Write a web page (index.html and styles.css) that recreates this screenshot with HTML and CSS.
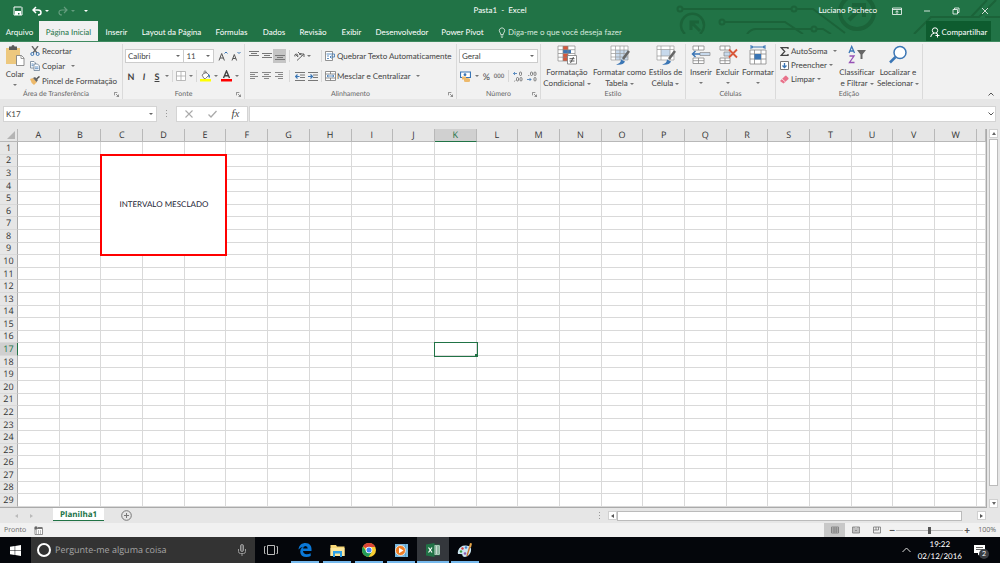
FILE: index.html
```html
<!DOCTYPE html>
<html lang="pt-BR">
<head>
<meta charset="utf-8">
<title>Pasta1 - Excel</title>
<link rel="stylesheet" href="styles.css">
</head>
<body>
<header class="top">
  <svg class="circuit" width="325" height="34" viewBox="0 0 325 34" fill="none" stroke="#1b6339" stroke-width="2">
    <circle cx="5" cy="9" r="2.5"/><path d="M8 9h109"/><circle cx="119" cy="9" r="2.500"/><path d="M122 9h16l32 24"/>
    <path d="M10 34a11.500 11.500 0 1 1 15 0" stroke-width="2.500"/><path d="M25 31l-8-8M16 30v-8h8" stroke-width="3"/>
    <circle cx="47" cy="22" r="2.500"/><path d="M50 22h60l18 12M72 34q4-5 9-5h56M142 29h6l8 5"/><circle cx="139" cy="29" r="2.500"/>
    <circle cx="182" cy="12" r="17" stroke-width="4"/><path d="M174 20l14-14M177 5h12v12" stroke-width="4"/>
    <path d="M239 34l17-17h48l17-17M296 17l16-17M310 17h15"/>
  </svg>
  <div class="titlebar">
    <div class="quick">
      <button aria-label="Salvar"><svg width="10" height="10" viewBox="0 0 10 10"><path d="M1 1h7.500l.5.5V9H1z" fill="none" stroke="#fff"/><path d="M2 5h6v4H6.500V7H5v2H2z" fill="#fff"/></svg></button>
      <button aria-label="Desfazer"><svg width="10" height="10" viewBox="0 0 10 10" fill="none" stroke="#fff" stroke-width="1.500"><path d="M4 1L1 4l3 3M1 4h5q3 0 3 2.500T6 9"/></svg><i class="caret"></i></button>
      <button class="off" aria-label="Refazer"><svg width="10" height="10" viewBox="0 0 10 10" fill="none" stroke="#fff" stroke-width="1.200"><path d="M6 1l3 3-3 3M9 4H4Q1 4 1 6.500T4 9"/></svg><i class="caret"></i></button>
      <button aria-label="Personalizar"><i class="caret bar"></i></button>
    </div>
    <h1>Pasta1 &nbsp;-&nbsp; Excel</h1>
    <div class="window">
      <span>Luciano Pacheco</span>
      <button aria-label="Opções da faixa"><svg width="10" height="8" viewBox="0 0 10 8" fill="none" stroke="#fff" stroke-width=".8"><path d="M.5 1h9v6.500h-9zM.5 2.500h9M5 7V4M3.500 5L5 3.700 6.500 5"/></svg></button>
      <button aria-label="Minimizar"><svg width="8" height="8" viewBox="0 0 8 8"><path d="M1 4h6" stroke="#fff" stroke-width=".8"/></svg></button>
      <button aria-label="Restaurar"><svg width="8" height="8" viewBox="0 0 8 8" fill="none" stroke="#fff" stroke-width=".8"><path d="M1 2.500h4.500V7H1zM2.500 2.500V1H7v4.500H5.500"/></svg></button>
      <button aria-label="Fechar"><svg width="8" height="8" viewBox="0 0 8 8"><path d="M1 1l6 6M7 1L1 7" stroke="#fff" stroke-width=".8"/></svg></button>
    </div>
  </div>
  <nav class="tabs">
    <button>Arquivo</button><button class="current">Página Inicial</button><button>Inserir</button><button>Layout da Página</button><button>Fórmulas</button><button>Dados</button><button>Revisão</button><button>Exibir</button><button>Desenvolvedor</button><button>Power Pivot</button>
    <button class="tell"><svg width="8" height="11" viewBox="0 0 8 11" fill="none" stroke="#e8f3ec" stroke-width=".8"><path d="M2.700 7.500Q2.700 6 1.700 5A2.700 2.700 0 1 1 6.300 5Q5.300 6 5.300 7.500zM2.700 9h2.600M3.200 10.300h1.600"/></svg>Diga-me o que você deseja fazer</button>
    <button class="share"><svg width="10" height="11" viewBox="0 0 10 11" fill="none" stroke="#fff"><circle cx="5" cy="3.500" r="2.700"/><path d="M.7 10Q1 6.700 4 6.200M6 6.200l1 .8M7.500 6.500v4M5.500 8.500h4"/></svg>Compartilhar</button>
  </nav>
</header>

<section class="ribbon">
  <div class="group clipboard">
    <div class="body">
      <button class="big"><svg width="20" height="22" viewBox="0 0 20 22"><path d="M1 3h14v16H1z" fill="#edc87e"/><path d="M4 1.500h2.500a1.500 1.500 0 0 1 3 0H12V5H4z" fill="#5b5b5b"/><path d="M11.500 10.500h5l2.500 2.500v7.500h-7.500z" fill="#fff" stroke="#777" stroke-width=".8"/><path d="M16 10.500v3h3" fill="none" stroke="#777" stroke-width=".7"/></svg><span>Colar</span><i class="caret"></i></button>
      <div class="list">
        <button><svg width="10" height="10" viewBox="0 0 10 10" fill="none"><path d="M2 0l5 7M8 0L3 7" stroke="#666" stroke-width="1.300"/><circle cx="2.300" cy="8" r="1.500" stroke="#3b76b5"/><circle cx="7.700" cy="8" r="1.500" stroke="#3b76b5"/></svg>Recortar</button>
        <button><svg width="10" height="10" viewBox="0 0 10 10" fill="#fff" stroke="#6b7f94" stroke-width=".8"><path d="M.5.5h3.500l1.500 1.500v5h-5z"/><path d="M4 3h3.500l2 2v4.500H4z"/><path d="M5 6h3.500M5 7.700h3.500M1.500 3h2M1.500 4.700h2" stroke="#3b76b5"/></svg>Copiar<i class="caret wide"></i></button>
        <button><svg width="10" height="10" viewBox="0 0 10 10"><path d="M0 3l3-1 4 4-3 3q-3-2-4-6z" fill="#edb96b"/><path d="M3 2l2-1 3 3-1.500 2z" fill="#666"/><path d="M6.500 3L9.500.5" stroke="#555" stroke-width="1.600"/></svg>Pincel de Formatação</button>
      </div>
    </div>
    <h2>Área de Transferência<svg class="launch" viewBox="0 0 6 6"><path d="M.5 4V.5H4M2.500 2.500l3 3M5.500 3v2.500H3"/></svg></h2>
  </div>

  <div class="group font">
    <div class="body rows">
      <div class="row"><select class="family" aria-label="Fonte"><option>Calibri</option></select><select class="size" aria-label="Tamanho"><option>11</option></select>
        <button class="letter grow" aria-label="Aumentar fonte"><svg width="10" height="10" viewBox="0 0 10 10" fill="none"><path d="M1 9.500l2.700-7 2.700 7M2 7h3.500" stroke="#555"/><path d="M6.500 2.500L8 1l1.500 1.500" stroke="#3b76b5"/></svg></button>
        <button class="letter" aria-label="Diminuir fonte"><svg width="10" height="10" viewBox="0 0 10 10" fill="none"><path d="M1 9.500l2.300-6 2.300 6M2 7.500h2.700" stroke="#555"/><path d="M6.500 1L8 2.500 9.500 1" stroke="#3b76b5"/></svg></button></div>
      <div class="row marks"><button><b>N</b></button><button><b><em>I</em></b></button><button><b><u>S</u></b></button><i class="caret"></i><i class="sep"></i>
        <button aria-label="Bordas"><svg width="10" height="10" viewBox="0 0 10 10" fill="#fff" stroke="#aaa" stroke-width=".8"><path d="M.5.5h9v9h-9zM5 .5v9M.5 5h9"/></svg></button><i class="caret"></i><i class="sep"></i>
        <button aria-label="Cor de preenchimento"><svg width="11" height="12" viewBox="0 0 11 12"><path d="M2 5l4-3 3 3-3.500 3.500H4z" fill="#fff" stroke="#666" stroke-width=".8"/><path d="M4 4V1.500q1-1.500 2 0V4" fill="none" stroke="#666" stroke-width=".7"/><path d="M8 4q3 1 1.500 4Q8 7 8 4z" fill="#3b76b5"/><path d="M0 9h11v2.500H0z" fill="#ff0"/></svg></button><i class="caret"></i>
        <button aria-label="Cor da fonte"><svg width="11" height="12" viewBox="0 0 11 12"><path d="M2.500 8l3-7 3 7M3.500 5.700h4" fill="none" stroke="#444" stroke-width="1.400"/><path d="M0 9h11v2.500H0z" fill="red"/></svg></button><i class="caret"></i></div>
    </div>
    <h2>Fonte<svg class="launch" viewBox="0 0 6 6"><path d="M.5 4V.5H4M2.500 2.500l3 3M5.500 3v2.500H3"/></svg></h2>
  </div>

  <div class="group align">
    <div class="body rows">
      <div class="row"><button class="cell" aria-label="Alinhar em cima"><svg width="10" height="10" viewBox="0 0 10 10" stroke="#777"><path d="M0 .5h10M2 2.500h6M0 4.500h10"/></svg></button><button class="cell" aria-label="Alinhar no meio"><svg width="10" height="10" viewBox="0 0 10 10" stroke="#777"><path d="M0 2.500h10M2 4.500h6M0 6.500h10"/></svg></button><button class="cell on" aria-label="Alinhar embaixo"><svg width="10" height="10" viewBox="0 0 10 10" stroke="#777"><path d="M0 4.500h10M2 6.500h6M0 8.500h10"/></svg></button><i class="sep"></i>
        <button class="cell" aria-label="Orientação"><svg width="11" height="10" viewBox="0 0 11 10" fill="none" stroke="#666"><path d="M3 9.500L10 3M10 6V3H7"/><path d="M1 3l3 3M1 5.500q-1-2 1-2.500t2 2.500M4 1l3.500 3.500M5.500 4q0-2 2-1.500"/></svg></button><i class="caret"></i><i class="sep last"></i>
        <button class="text"><svg width="11" height="10" viewBox="0 0 11 10" fill="#fff" stroke="#777" stroke-width=".8"><path d="M.5.500h7v9h-7z"/><path d="M1.500 3h8v3H5M6.500 4.500L5 6l1.500 1.500M2 5h2M2 7.500h2" fill="none" stroke="#3b76b5"/></svg>Quebrar Texto Automaticamente</button></div>
      <div class="row"><button class="cell" aria-label="Alinhar à esquerda"><svg width="9" height="8" viewBox="0 0 9 8" stroke="#888"><path d="M1 .5h8M1 2.500h5M1 4.500h8M1 6.500h5"/></svg></button><button class="cell" aria-label="Centralizar"><svg width="9" height="8" viewBox="0 0 9 8" stroke="#888"><path d="M0 .5h9M2 2.500h5M0 4.500h9M2 6.500h5"/></svg></button><button class="cell" aria-label="Alinhar à direita"><svg width="9" height="8" viewBox="0 0 9 8" stroke="#888"><path d="M0 .5h8M3 2.500h5M0 4.500h8M3 6.500h5"/></svg></button><i class="sep"></i>
        <button class="cell" aria-label="Diminuir recuo"><svg width="10" height="9" viewBox="0 0 10 9" stroke="#777" fill="none"><path d="M0 .5h10M5 3h5M5 5.500h5M0 8.500h10"/><path d="M4.500 4.500H.7M2.500 2.500l-2 2 2 2" stroke="#3b76b5" stroke-width="1.200"/></svg></button><button class="cell" aria-label="Aumentar recuo"><svg width="10" height="9" viewBox="0 0 10 9" stroke="#777" fill="none"><path d="M0 .5h10M5 3h5M5 5.500h5M0 8.500h10"/><path d="M0 4.500h4M2.500 2.500l2 2-2 2" stroke="#3b76b5" stroke-width="1.200"/></svg></button><i class="sep last"></i>
        <button class="text"><svg width="11" height="10" viewBox="0 0 11 10" fill="#fff" stroke="#777" stroke-width=".8"><path d="M.5.500h10v9H.5zM.5 3h10M.5 7h10M5.500.5V3M5.500 7v2.500"/><path d="M2 5h7M3.500 4L2 5l1.500 1M7.500 4L9 5 7.500 6" fill="none" stroke="#3b76b5"/></svg>Mesclar e Centralizar<i class="caret wide"></i></button></div>
    </div>
    <h2>Alinhamento<svg class="launch" viewBox="0 0 6 6"><path d="M.5 4V.5H4M2.500 2.500l3 3M5.500 3v2.500H3"/></svg></h2>
  </div>

  <div class="group number">
    <div class="body rows">
      <div class="row"><select class="format" aria-label="Formato"><option>Geral</option></select></div>
      <div class="row spread"><button aria-label="Moeda"><svg width="11" height="11" viewBox="0 0 11 11"><path d="M.5 1h10v5.500H.5z" fill="#fff" stroke="#3b76b5" stroke-width="1.200"/><circle cx="5" cy="3.700" r="1.400" fill="#3b76b5"/><path d="M4 8q3-2 6 0v2.500q-3 1-6 0zM2 5.500h4v3H2z" fill="#edb96b"/></svg></button><i class="caret"></i><button class="pct">%</button><button class="zeros" aria-label="Milhares">000</button><i class="sep"></i>
        <button aria-label="Mais casas"><svg width="10" height="11" viewBox="0 0 10 11" fill="none" stroke="#666" stroke-width=".8"><path d="M4 2.500H.5M2 1L.5 2.500 2 4" stroke="#3b76b5"/><rect x="6.500" y="1" width="2" height="3.500" rx="1"/><rect x="3.500" y="6.500" width="2" height="3.500" rx="1"/><rect x="7" y="6.500" width="2" height="3.500" rx="1"/><path d="M1.500 10.500l.5-1"/></svg></button><button aria-label="Menos casas"><svg width="10" height="11" viewBox="0 0 10 11" fill="none" stroke="#666" stroke-width=".8"><path d="M0 8.500h4M2.500 7L4 8.500 2.500 10" stroke="#3b76b5"/><rect x="3.500" y="1" width="2" height="3.500" rx="1"/><rect x="7" y="1" width="2" height="3.500" rx="1"/><rect x="7" y="6.500" width="2" height="3.500" rx="1"/><path d="M1.500 5l.5-1"/></svg></button></div>
    </div>
    <h2>Número<svg class="launch" viewBox="0 0 6 6"><path d="M.5 4V.5H4M2.500 2.500l3 3M5.500 3v2.500H3"/></svg></h2>
  </div>

  <div class="group styles">
    <div class="body">
      <button class="big"><svg width="20" height="20" viewBox="0 0 20 20"><path d="M1 1h17v15H1z" fill="#fff"/><path d="M6 1h5v4H6zM6 12h5v4H6z" fill="#d9583b"/><path d="M6 5h8v3.500H6z" fill="#3b76b5"/><path d="M6 8.500h5V12H6z" fill="#d9583b"/><path d="M1 1h17v15H1zM6 1v15M11 1v15M1 4.700h17M1 8.500h17M1 12.200h17" fill="none" stroke="#888" stroke-width=".7"/><path d="M10.500 10.500h9v8.500h-9z" fill="#fff" stroke="#777" stroke-width=".8"/><path d="M12.500 13.700h5M12.500 16h5M16.500 12l-3 6" stroke="#444" stroke-width=".9"/></svg><span>Formatação<br>Condicional <i class="caret"></i></span></button>
      <button class="big"><svg width="20" height="20" viewBox="0 0 20 20"><path d="M1 1h17v14H1z" fill="#fff"/><path d="M5.500 5H18v10H5.500z" fill="#c7d9ec"/><path d="M1 1h17v14H1zM5.500 1v14M10 1v14M14 1v14M1 5h17M1 8.500h17M1 12h17" fill="none" stroke="#999" stroke-width=".7"/><path d="M19 6l-6 8" stroke="#666" stroke-width="2.600"/><path d="M6 19.500q5-1 5-5l4 2q-2 4-9 3z" fill="#3b76b5"/></svg><span>Formatar como<br>Tabela <i class="caret"></i></span></button>
      <button class="big"><svg width="20" height="20" viewBox="0 0 20 20"><path d="M1 1h17v14H1z" fill="#fff" stroke="#999" stroke-width=".7"/><path d="M5 4.500h9v6.500H5z" fill="#c7d9ec"/><path d="M5 1v14M14 1v14M1 4.500h17M1 11h17" fill="none" stroke="#999" stroke-width=".7"/><path d="M19 6l-6 8" stroke="#666" stroke-width="2.600"/><path d="M6 19.500q5-1 5-5l4 2q-2 4-9 3z" fill="#3b76b5"/></svg><span>Estilos de<br>Célula <i class="caret"></i></span></button>
    </div>
    <h2>Estilo</h2>
  </div>

  <div class="group cells">
    <div class="body">
      <button class="big"><svg width="20" height="20" viewBox="0 0 20 20"><path d="M2 1h11v4H2zM2 13h11v5.500H2zM7.500 1v4M7.500 13v5.500M2 15.700h11" fill="#fff" stroke="#888" stroke-width=".8"/><path d="M9 7.500h10v3H9z" fill="#c7d9ec" stroke="#888" stroke-width=".7"/><path d="M9 9H1.500M4.500 6l-3 3 3 3" fill="none" stroke="#3b76b5" stroke-width="1.500"/></svg><span>Inserir</span><i class="caret"></i></button>
      <button class="big"><svg width="20" height="20" viewBox="0 0 20 20"><path d="M2 1h10v4H2zM2 13h10v5.500H2zM7 1v4M7 13v5.500M2 15.700h10" fill="#fff" stroke="#888" stroke-width=".8"/><path d="M6 7h6v4H6z" fill="#c7d9ec" stroke="#888" stroke-width=".7"/><path d="M11 4.500l8 8M19 4.500l-8 8" stroke="#d9583b" stroke-width="1.800"/></svg><span>Excluir</span><i class="caret"></i></button>
      <button class="big"><svg width="20" height="20" viewBox="0 0 20 20"><path d="M2 5h16v14H2zM6.500 5v14M13 5v14M2 9h16M2 14h16" fill="#fff" stroke="#888" stroke-width=".8"/><path d="M6.500 9H13v5.500H6.500z" fill="#3b76b5"/><path d="M3 2h14M3 0v4M17 0v4M5 1L3.500 2 5 3M15 1l1.500 1L15 3" fill="none" stroke="#3b76b5"/></svg><span>Formatar</span><i class="caret"></i></button>
    </div>
    <h2>Células</h2>
  </div>

  <div class="group editing">
    <div class="body">
      <div class="list">
        <button><svg width="9" height="9" viewBox="0 0 9 9"><path d="M8 2V.7H1.200L4.700 4.500 1.200 8.300H8V7" fill="none" stroke="#444" stroke-width="1.300"/></svg>AutoSoma<i class="caret wide"></i></button>
        <button><svg width="9" height="9" viewBox="0 0 9 9"><path d="M.5.500h8v8h-8z" fill="#fff" stroke="#777"/><path d="M4.500 2v4.500M2.500 4.500l2 2 2-2" fill="none" stroke="#3b76b5" stroke-width="1.300"/></svg>Preencher<i class="caret"></i></button>
        <button><svg width="9" height="9" viewBox="0 0 9 9"><path d="M0 6l5-5 1-.5L8.500 3v1L3.500 8.500z" fill="#e8718a"/><path d="M2 4l3.500 3" stroke="#fbd5dc"/></svg>Limpar<i class="caret"></i></button>
      </div>
      <button class="big"><svg width="20" height="20" viewBox="0 0 20 20" fill="none"><path d="M2 8l2.700-6.500L7.500 8M3 6h3.500" stroke="#3b76b5" stroke-width="1.300"/><path d="M2.500 11H7l-4.500 6.500H7.500" stroke="#9651b5" stroke-width="1.300"/><path d="M10 5h9l-3.500 4.500V14h-2V9.500z" fill="#666"/></svg><span>Classificar<br>e Filtrar <i class="caret"></i></span></button>
      <button class="big"><svg width="20" height="20" viewBox="0 0 20 20"><circle cx="12" cy="7.500" r="6" fill="#fff" stroke="#3b76b5" stroke-width="1.500"/><path d="M7.500 12L2 17.500" stroke="#3b76b5" stroke-width="2.500"/></svg><span>Localizar e<br>Selecionar <i class="caret"></i></span></button>
    </div>
    <h2>Edição</h2>
  </div>
  <button class="collapse" aria-label="Recolher"><svg width="6" height="4" viewBox="0 0 6 4"><path d="M.5 3.500L3 1l2.500 2.500" fill="none" stroke="#555"/></svg></button>
</section>

<section class="formula">
  <select class="name" aria-label="Caixa de nome"><option>K17</option></select>
  <i class="dots"></i>
  <div class="fx"><button aria-label="Cancelar"><svg width="8" height="8" viewBox="0 0 8 8"><path d="M.5.5l7 7M7.500.5l-7 7" stroke="#aaa" stroke-width="1.100"/></svg></button><button aria-label="Inserir"><svg width="9" height="8" viewBox="0 0 9 8"><path d="M.5 4.500L3 7l5.500-6" fill="none" stroke="#aaa" stroke-width="1.300"/></svg></button><button class="fn"><em>fx</em></button></div>
  <div class="entry"><input type="text" aria-label="Barra de fórmulas"><button aria-label="Expandir"><svg width="6" height="4" viewBox="0 0 6 4"><path d="M.5.5L3 3 5.500.5" fill="none" stroke="#555"/></svg></button></div>
</section>

<main class="sheet">
  <div class="gridwrap"><table class="grid" id="grid"></table></div>
  <div class="vscroll"><button aria-label="Para cima"><i class="arrow up"></i></button><div class="thumb"></div><button aria-label="Para baixo"><i class="arrow down"></i></button></div>
</main>

<div class="sheets">
  <div class="pick"><i class="arrow left dim"></i><i class="arrow right dim"></i><button class="sheet-tab">Planilha1</button><button aria-label="Nova planilha"><svg width="11" height="11" viewBox="0 0 11 11" fill="none" stroke="#777"><circle cx="5.500" cy="5.500" r="4.800"/><path d="M5.500 3v5M3 5.500h5"/></svg></button></div>
  <div class="hscroll"><i class="dots"></i><button aria-label="Esquerda"><i class="arrow left"></i></button><div class="thumb"></div><button aria-label="Direita"><i class="arrow right"></i></button></div>
</div>

<footer class="status">
  <span>Pronto</span><svg width="9" height="9" viewBox="0 0 9 9"><path d="M1 2.500h7.500v6H1z" fill="#fff" stroke="#777" stroke-width=".8"/><circle cx="2" cy="2" r="1.700" fill="#666"/><path d="M4 1h4.500v2H4z" fill="#777"/><path d="M2 5h5.500M2 7h5.500" stroke="#777" stroke-dasharray="1 1"/></svg>
  <div class="views">
    <button class="on" aria-label="Normal"><svg width="8" height="8" viewBox="0 0 8 8" fill="none" stroke="#777" stroke-width=".8"><path d="M.5 1h7v6h-7zM.5 3h7M.5 5h7M3 1v6M5.200 1v6"/></svg></button><button aria-label="Layout da Página"><svg width="8" height="8" viewBox="0 0 8 8" fill="none" stroke="#777" stroke-width=".8"><path d="M.5 1h7v6h-7zM2 1v6M6 1v6M3 3h2M3 4.500h2M3 6h2"/></svg></button><button aria-label="Quebra de Página"><svg width="8" height="8" viewBox="0 0 8 8" fill="none" stroke="#777" stroke-width=".8"><path d="M.5 1h7v6h-7zM3 1v3h2.500V1M.5 4H3"/></svg></button>
  </div>
  <div class="zoom"><button aria-label="Menos zoom">−</button><input type="range" min="10" max="190" value="100" aria-label="Zoom"><button aria-label="Mais zoom">+</button><span class="level">100%</span></div>
</footer>

<nav class="taskbar">
  <button class="start" aria-label="Iniciar"><svg width="11" height="11" viewBox="0 0 11 11" fill="#fff"><path d="M0 1.700l4.700-.7v4.200H0zM5.200.9L11 0v5.200H5.200zM0 5.700h4.700V10L0 9.300zM5.200 5.700H11V11l-5.800-.9z"/></svg></button>
  <label class="search"><svg width="16" height="16" viewBox="0 0 16 16"><circle cx="8" cy="8" r="6" fill="none" stroke="#fff" stroke-width="2"/></svg><input type="text" placeholder="Pergunte-me alguma coisa" aria-label="Pesquisa"><svg width="8" height="12" viewBox="0 0 8 12" fill="none" stroke="#999"><rect x="2.500" y=".5" width="3" height="7" rx="1.500" fill="#666"/><path d="M.5 5v2.500q0 2 2 2h3q2 0 2-2V5M4 9.500V12"/></svg></label>
  <button class="app" aria-label="Visão de tarefas"><svg width="14" height="12" viewBox="0 0 14 12" fill="none" stroke="#bbb"><path d="M3.500 1.500h7v9h-7zM1.500 2.500h-1v7h1M12.500 2.500h1v7h-1"/></svg></button>
  <div class="apps">
    <button class="app open" aria-label="Edge"><svg width="14" height="14" viewBox="0 0 14 14"><path d="M.5 6.500C1 2 4 0 7.500 0 11.500 0 13.500 3 13.500 6v2H5q.2 3 3.700 3.200 2.300 0 4-1v2.900Q11 14 8.500 14 2.500 14 2.200 8.800 2.200 5.500 5 3.800 2.500 4.300.5 6.500zM5 5.500h4.700Q9.700 3 7.500 3T5 5.500z" fill="#0a78d7"/></svg></button>
    <button class="app open" aria-label="Explorador"><svg width="15" height="13" viewBox="0 0 15 13"><path d="M.5 1H6l1 1.500h7.500V12H.5z" fill="#f9d877"/><path d="M.5 4h14v8H.5z" fill="#fce69c"/><path d="M3 7h9v6h-2V9.500H5V13H3z" fill="#2fa1e6"/></svg></button>
    <button class="app open" aria-label="Chrome"><svg width="14" height="14" viewBox="0 0 14 14"><circle cx="7" cy="7" r="7" fill="#f9cd32"/><path d="M7 7L1 3.400A7 7 0 0 1 13.200 4H7z" fill="#db4437"/><path d="M1 3.400A7 7 0 0 0 6.500 14L10 8.700 7 7 4.400 8.500z" fill="#229c58"/><circle cx="7" cy="7" r="3.300" fill="#fff"/><circle cx="7" cy="7" r="2.500" fill="#4385f5"/></svg></button>
    <button class="app open" aria-label="Media Player"><svg width="13" height="13" viewBox="0 0 13 13"><path d="M0 0h13v13H0z" fill="#79b9df"/><path d="M10.500 0v13" stroke="#4d8fb8" stroke-width=".6"/><circle cx="5.500" cy="6.500" r="5" fill="#f07d22" stroke="#fff" stroke-width=".7"/><path d="M4 3.700l4.500 2.800L4 9.300z" fill="#fff"/></svg></button>
    <button class="app open active" aria-label="Excel"><svg width="14" height="14" viewBox="0 0 14 14"><path d="M7.500 2H14v10H7.500z" fill="#fff" stroke="#217346" stroke-width=".8"/><path d="M8.500 4h4.500M8.500 6h4.500M8.500 8h4.500M8.500 10h4.500" stroke="#217346" stroke-dasharray="2 .5"/><path d="M0 1.500L8.500 0v14L0 12.500z" fill="#217346"/><path d="M2.500 4.500l3.500 5M6 4.500l-3.500 5" stroke="#fff" stroke-width="1.200"/></svg></button>
    <button class="app open" aria-label="Paint"><svg width="16" height="15" viewBox="0 0 16 15"><path d="M1 8q2-6 8-5.500t5 5.500-6 6q-3-.5-2.500-2T1 11q-.5-1 0-3z" fill="#cde6f2"/><circle cx="4" cy="8.500" r="1.200" fill="#3c9e48"/><circle cx="5.500" cy="5.500" r="1.200" fill="#d93c3c"/><circle cx="9" cy="4.500" r="1.200" fill="#3f80cf"/><circle cx="8" cy="10.500" r="1.300" fill="#8b5bb0"/><path d="M10 13l3-10" stroke="#c9772f" stroke-width="1.400"/><path d="M12 4l1-4 2 .5-1 4z" fill="#e8a648"/></svg></button>
  </div>
  <div class="tray"><button aria-label="Ícones ocultos"><svg width="9" height="6" viewBox="0 0 9 6"><path d="M.5 5l4-4 4 4" fill="none" stroke="#ddd"/></svg></button><time>19:22<br>02/12/2016</time><button class="note" aria-label="Notificações"><svg width="11" height="11" viewBox="0 0 11 11"><path d="M0 0h11v8H6.500L4 10.500V8H0z" fill="#fff"/><path d="M2 2.500h7M2 4.500h7" stroke="#222" stroke-width=".7"/></svg><span class="badge">2</span></button></div>
</nav>
<script src="script.js"></script>
</body>
</html>
```

FILE: styles.css
```css
* { box-sizing: border-box; }
html, body { height: 100%; }
body {
  margin: 0;
  display: flex;
  flex-direction: column;
  overflow: hidden;
  background: #e6e6e6;
  color: #444;
  font: 8px/11px Lato, "Open Sans", sans-serif;
  font-variant-ligatures: none;
  text-rendering: geometricPrecision;
}
button, select, input { font: inherit; color: inherit; text-rendering: inherit; font-variant-ligatures: none; }
button { display: inline-flex; align-items: center; justify-content: center; padding: 0; border: 0; background: none; white-space: nowrap; }
svg { flex: none; display: block; }
h1, h2 { margin: 0; font-weight: normal; }
h1 { font-size: 8px; }

.caret { flex: none; display: inline-block; border: solid transparent; border-width: 2px 2px 0; border-top-color: #777; vertical-align: middle; }
.caret.wide { margin-left: 4px; }
.caret.bar { border-top-color: #fff; }
.sep { flex: none; width: 1px; height: 12px; background: #d8d8d8; }
.dots { flex: none; width: 1px; height: 8px; background: repeating-linear-gradient(#999 0 1px, transparent 1px 3px); }
.arrow { display: inline-block; border: 3px solid transparent; }
.arrow.up { border-width: 0 2px 3px; border-bottom-color: #666; }
.arrow.down { border-width: 3px 2px 0; border-top-color: #666; }
.arrow.left { border-width: 2px 3px 2px 0; border-right-color: #555; }
.arrow.right { border-width: 2px 0 2px 3px; border-left-color: #555; }
.arrow.dim { opacity: .3; }

/* Title bar and tabs */
.top { position: relative; background: #217346; color: #fff; border-bottom: 1px solid #3f8a60; }
.circuit { position: absolute; right: 0; top: 0; }
.titlebar { position: relative; display: grid; grid-template-columns: 1fr auto 1fr; align-items: center; height: 21px; }
.quick { display: flex; align-items: center; gap: 9px; padding-left: 13px; }
.quick button { gap: 3px; }
.quick .caret { border-top-color: #fff; }
.quick .off { opacity: .3; }
.window { display: flex; align-items: center; justify-content: flex-end; padding-right: 11px; }
.window button { margin-left: 21px; }
.window span + button { margin-left: 15px; }
.tabs { position: relative; display: grid; grid-template-columns: 39px 59px 37px 73px 47px 38px 40px 37px 64px 57px auto 1fr; align-items: stretch; height: 20px; }
.tabs button { padding-top: 2px; }
.tabs .current { background: #f1f1f1; color: #217346; }
.tabs .tell { gap: 2px; padding-left: 7px; color: #d5e8dc; }
.tabs .share { justify-self: end; gap: 2px; width: 65px; margin-right: 9px; background: #0e5c2f; }

/* Ribbon */
.ribbon { display: flex; height: 57px; background: #f1f1f1; }
.group { flex: none; display: flex; flex-direction: column; margin-top: 2px; border-right: 1px solid #dadada; }
.body { flex: 1; min-height: 0; display: flex; }
.group h2 { flex: none; position: relative; line-height: 10px; font-size: 7px; color: #666; text-align: center; }
.launch { position: absolute; right: 3px; top: 3px; width: 5px; height: 5px; fill: none; stroke: #777; stroke-width: 1; }
.clipboard { width: 123px; }
.font { width: 122px; }
.align { width: 212px; }
.number { width: 84px; }
.styles { width: 145px; }
.cells { width: 90px; }
.editing { width: 147px; }
.clipboard h2 { padding-right: 10px; }
.big { flex-direction: column; justify-content: flex-start; padding-top: 1px; }
.big svg { margin-bottom: 2px; }
.big > .caret { margin-top: 4px; }
.clipboard .big { width: 30px; }
.styles .body { display: grid; grid-template-columns: 52px 53px 39px; }
.cells .body { display: grid; grid-template-columns: 26px 27px 34px; padding-left: 2px; }
.editing .body { display: grid; grid-template-columns: 62px 38px 44px; }
.list { display: flex; flex-direction: column; justify-content: space-between; align-items: flex-start; padding-bottom: 1px; }
.list button { height: 14px; gap: 2px; }
.editing .list { padding-left: 4px; padding-bottom: 3px; }
.rows { flex-direction: column; padding: 5px 2px 6px; justify-content: space-between; }
.row { display: flex; align-items: center; height: 14px; }
select { appearance: none; height: 14px; padding: 0 2px; border: 1px solid #ccc; border-radius: 0; background: #fff url("data:image/svg+xml,%3Csvg xmlns='http://www.w3.org/2000/svg' width='4' height='2'%3E%3Cpath d='M0 0h4L2 2z' fill='%23666'/%3E%3C/svg%3E") no-repeat right 3px center; }
.family { width: 61px; }
.size { width: 31px; margin-left: -1px; }
.letter { width: 13px; }
.letter.grow { margin-left: 3px; }
.marks { font-size: 9px; justify-content: space-between; padding: 0 3px 0 1px; }
.marks button:nth-child(-n+3) { width: 10px; }
.cell { width: 13px; height: 14px; }
.cell.on { background: #c5c5c5; }
.align .sep { margin: 0 3px; }
.align .cell + .caret { margin-left: 1px; }
.align .sep.last { margin: 0 3px 0 auto; }
.align .text { width: 129px; justify-content: flex-start; gap: 1px; }
.format { width: 80px; }
.number .spread { justify-content: space-between; padding: 0 1px; }
.pct { font-size: 9px; }
.zeros { font-size: 6px; font-weight: bold; color: #777; }
.collapse { margin: auto 6px 3px auto; }

/* Formula bar */
.formula { display: flex; align-items: center; gap: 9px; height: 30px; padding: 0 4px 0 3px; }
.formula select { width: 154px; height: 16px; border-color: #d4d4d4; }
.fx { display: flex; justify-content: space-around; width: 72px; height: 16px; background: #fff; border: 1px solid #d4d4d4; }
.fn { font: 11px/12px "Liberation Serif", serif; }
.entry { flex: 1; display: flex; height: 16px; margin-left: -8px; padding-right: 1px; background: #fff; border: 1px solid #d4d4d4; }
.entry input { flex: 1; min-width: 0; border: 0; background: none; outline: none; }

/* Worksheet */
.sheet { flex: 1; min-height: 0; display: flex; }
.gridwrap { flex: 1; min-width: 0; background: #fff; border-right: 1px solid #aaa; border-bottom: 1px solid #aaa; }
.grid { width: 100%; height: 100%; table-layout: fixed; border-collapse: separate; border-spacing: 0; font: 9px/10px "Open Sans", sans-serif; color: #333; }
.grid th, .grid td { padding: 0; border: solid #d9d9d9; border-width: 0 1px 1px 0; font-weight: normal; text-align: center; }
.grid th { background: #e6e6e6; }
.grid thead th { border-color: #b8b8b8; }
.grid tbody th { border-right-color: #aaa; }
.grid .head { height: 13px; }
.grid .first { width: 18px; }
.grid .rest { width: 9px; }
.grid thead .hot { background: #d0d0d0; color: #217346; border-bottom-color: #217346; }
.grid tbody .hot { background: #d0d0d0; color: #217346; border-right-color: #217346; }
.grid .merged { border: 0; outline: 2px solid #f00; outline-offset: -1px; font: 8px/11px Lato, sans-serif; color: #223; }
.grid .selected { position: relative; outline: 1px solid #217346; }
.grid .selected::after { content: ""; position: absolute; right: -2px; bottom: -2px; width: 3px; height: 3px; background: #217346; }
.corner { display: block; width: 0; margin-left: auto; margin-right: 2px; border: solid transparent; border-width: 0 0 8px 8px; border-bottom-color: #b4b4b4; }
.vscroll { display: flex; flex-direction: column; width: 13px; padding: 0 2px; }
.vscroll button, .hscroll button { flex: none; width: 9px; height: 9px; background: #fff; border: 1px solid #d0d0d0; }
.vscroll .thumb { flex: 1; margin: 1px 0 13px; background: #fff; border: 1px solid #bbb; }

/* Sheet tabs */
.sheets { display: flex; justify-content: space-between; height: 15px; }
.pick { display: flex; align-items: center; padding-left: 15px; }
.pick .arrow.right { margin: 0 20px 0 12px; }
.sheet-tab { align-self: flex-start; height: 13px; width: 51px; margin-right: 17px; background: #fff; border-bottom: 1px solid #217346; color: #217346; font-family: "Open Sans", sans-serif; font-weight: bold; }
.hscroll { display: flex; align-items: center; width: 40%; min-width: 200px; padding-right: 14px; }
.hscroll .dots { margin: 0 8px 0 -1px; }
.hscroll .thumb { flex: 1; height: 10px; margin-right: 15px; background: #fff; border: 1px solid #bbb; }

/* Status bar */
.status { display: flex; align-items: center; height: 14px; padding: 0 4px; background: #f1f1f1; color: #666; font: 7px/12px "Open Sans", sans-serif; }
.status > span { margin-right: 8px; }
.status > span, .level { padding-top: 2px; }
.views { display: flex; margin-left: auto; }
.views button { width: 21px; height: 14px; }
.views .on { background: #c8c8c8; }
.zoom { display: flex; align-items: center; margin-left: 1px; }
.zoom button { width: 8px; font-size: 10px; font-weight: bold; color: #555; }
.zoom input { appearance: none; width: 67px; height: 12px; margin: 0; background: linear-gradient(#bbb, #bbb) center / 100% 1px no-repeat; }
.zoom input::-webkit-slider-thumb { appearance: none; width: 3px; height: 7px; background: #555; }
.level { margin-left: 7px; }

/* Taskbar */
.taskbar { display: flex; height: 26px; background: #04060b; color: #fff; }
.start { width: 31px; }
.search { display: flex; align-items: center; width: 224px; padding: 0 9px 0 5px; background: #333; }
.search input { flex: 1; min-width: 0; padding: 0 3px; border: 0; background: none; outline: none; font: 9px/12px "Open Sans", sans-serif; }
.search input::placeholder { color: #a5a5a5; opacity: 1; }
.apps { display: flex; margin-left: 2px; }
.app { width: 32px; height: 26px; border: solid transparent; border-width: 0 2px; }
.app.open { background: linear-gradient(#76b9ed, #76b9ed) bottom / 100% 2px no-repeat content-box; }
.app.active { border: 0; background-color: #34373c; background-clip: border-box; }
.tray { display: flex; align-items: center; gap: 7px; margin-left: auto; padding-right: 15px; }
.tray time { line-height: 12px; text-align: center; }
.note { position: relative; margin-left: 5px; }
.badge { position: absolute; left: 5px; top: 4px; width: 10px; height: 10px; border-radius: 50%; background: #3a3d42; font-size: 7px; line-height: 10px; }
```

FILE: script.js
```js
const table = document.getElementById('grid');
const letters = 'ABCDEFGHIJKLMNOPQRSTUVW'.split('');
const rowCount = 29;

let html = '<thead><tr class="head"><th class="first"><i class="corner"></i></th>';
for (const c of letters) html += `<th scope="col"${c === 'K' ? ' class="hot"' : ''}>${c}</th>`;
html += '<th class="rest"></th></tr></thead><tbody>';

for (let r = 1; r <= rowCount; r++) {
  html += `<tr><th scope="row"${r === 17 ? ' class="hot"' : ''}>${r}</th>`;
  for (const c of letters) {
    const inMerge = r >= 2 && r <= 9 && 'CDE'.includes(c);
    if (inMerge) {
      if (r === 2 && c === 'C') html += '<td class="merged" colspan="3" rowspan="8">INTERVALO MESCLADO</td>';
      continue;
    }
    html += r === 17 && c === 'K' ? '<td class="selected"></td>' : '<td></td>';
  }
  html += '<td></td></tr>';
}
table.innerHTML = html + '</tbody>';
```
